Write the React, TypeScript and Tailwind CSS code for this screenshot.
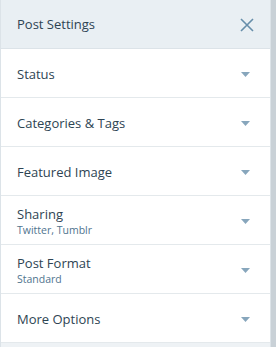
const rows = [
  { title: "Status" },
  { title: "Categories & Tags" },
  { title: "Featured Image" },
  { title: "Sharing", sub: "Twitter, Tumblr" },
  { title: "Post Format", sub: "Standard" },
  { title: "More Options" },
];

function Caret() {
  return (
    <svg width="9" height="5" viewBox="0 0 9 5" className="shrink-0">
      <path d="M0 0h9L4.5 5z" fill="#87a6bc" />
    </svg>
  );
}

export default function App() {
  return (
    <div
      className="flex w-[276px] h-[347px] bg-[#eef2f5] overflow-hidden"
      style={{ fontFamily: "'Open Sans', 'Noto Sans', sans-serif" }}
    >
      <div className="flex flex-col w-[271px] border-l border-r border-[#dce3e8]">
        {/* Header */}
        <div className="flex items-center justify-between h-[49px] pt-[2px] pl-4 pr-[16px] bg-[#e9eff3] border-b border-[#dce3e8]">
          <span className="text-[13px] text-[#2e4453]">Post Settings</span>
          <svg width="14" height="14" viewBox="0 0 14 14">
            <path d="M1 1l12 12M13 1L1 13" stroke="#668eaa" strokeWidth="1.6" />
          </svg>
        </div>

        {rows.map((row) => (
          <div
            key={row.title}
            className="flex items-center justify-between h-[49px] pt-[2px] pl-4 pr-[20px] bg-white border-b border-[#e4e9ec]"
          >
            <div className="flex flex-col">
              <span className="text-[13px] leading-[17px] text-[#2e4453]">{row.title}</span>
              {row.sub && (
                <span className="text-[10.5px] leading-[14px] text-[#4f748e]">{row.sub}</span>
              )}
            </div>
            <Caret />
          </div>
        ))}
      </div>
      <div className="w-[5px] h-full bg-[#c9d1d7]" />
    </div>
  );
}
